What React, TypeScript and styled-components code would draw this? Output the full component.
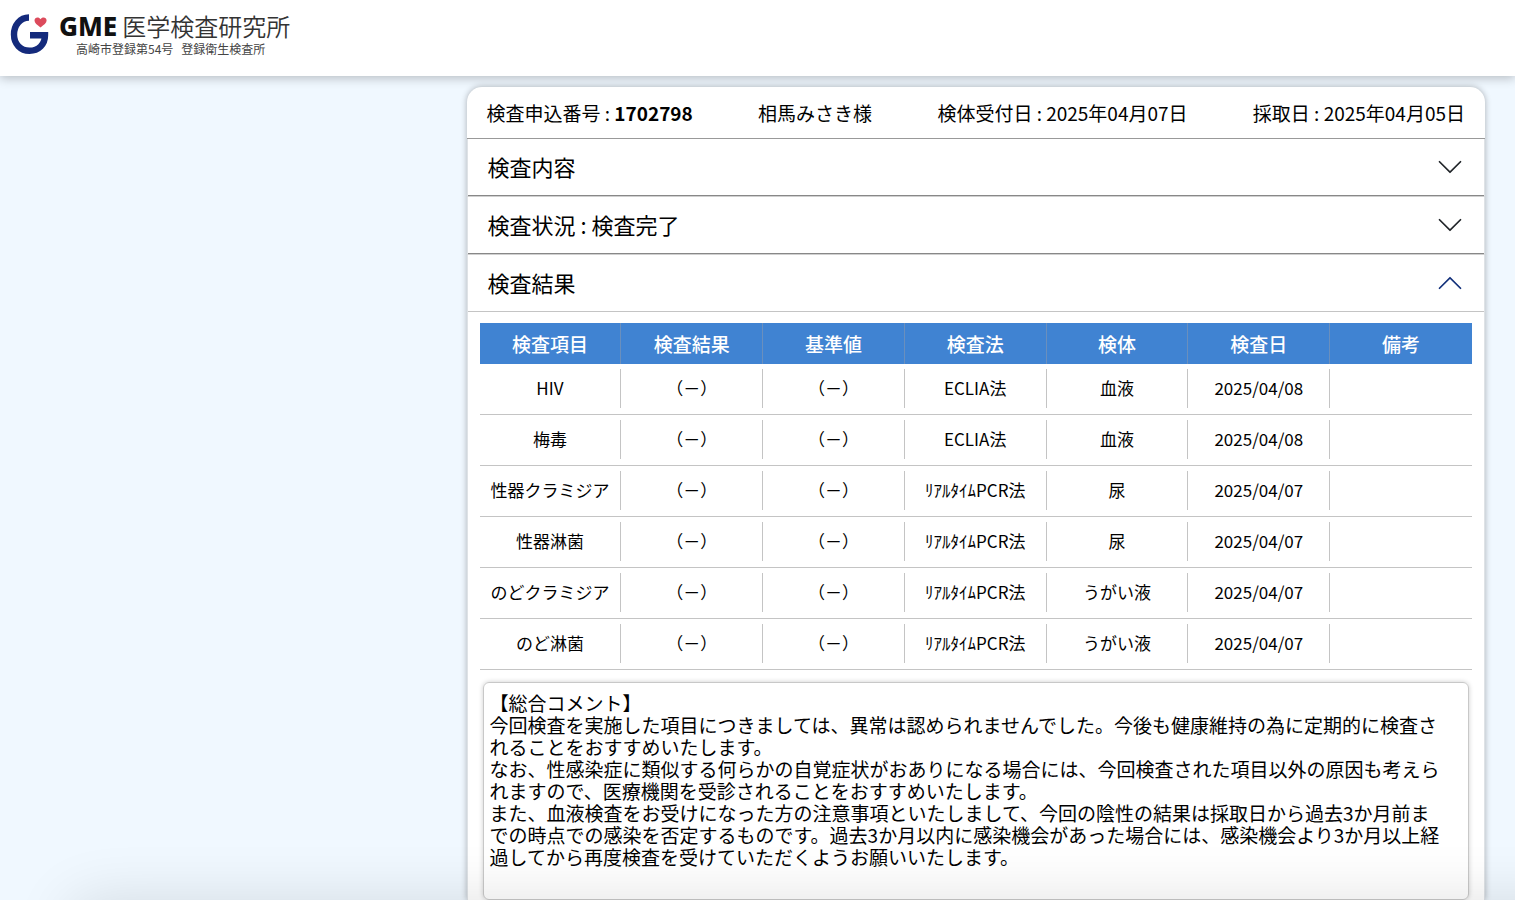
import React, { useState } from "react";
import type { ReactNode } from "react";
import styled, { createGlobalStyle } from "styled-components";

const GlobalStyle = createGlobalStyle`
  *, *::before, *::after { box-sizing: border-box; }
  body {
    margin: 0;
    background: #f0f8ff;
    color: #000;
    font-family: "Noto Sans CJK JP", sans-serif;
  }
`;

const Page = styled.div`
  display: flex;
  flex-direction: column;
  min-height: 100vh;
`;

const SiteHeader = styled.header`
  height: 76px;
  flex: none;
  padding: 10px;
  background: #fff;
  box-shadow: 0 2px 10px rgba(0, 0, 0, 0.25);
`;

const LogoLink = styled.a`
  display: inline-flex;
  gap: 10px;
  color: #222;
  text-decoration: none;
`;

const LogoMark = styled.svg`
  width: 39px;
  height: 46px;
`;

const LogoText = styled.span`
  display: flex;
  flex-direction: column;
`;

const LogoName = styled.span`
  display: flex;
  align-items: center;
  gap: 5px;
  height: 31px;
  color: #333;
  font-size: 24px;
  font-weight: 350;
  line-height: 30px;
`;

const LogoInitials = styled.span`
  color: #111;
  font-family: "Noto Sans", sans-serif;
  font-size: 26px;
  font-weight: 800;
`;

const LogoNote = styled.span`
  display: flex;
  gap: 8px;
  padding-left: 17px;
  color: #444;
  font-size: 12px;
  font-weight: 400;
  line-height: 16px;
`;

const Main = styled.main`
  display: flex;
  flex: 1;
  justify-content: flex-end;
  padding: 11px 30px 0;
`;

const Card = styled.article`
  width: 70%;
  background: #fff;
  border-radius: 15px 15px 0 0;
  box-shadow: 0 0 6px rgba(0, 0, 0, 0.3);
`;

const Summary = styled.div`
  display: flex;
  justify-content: space-between;
  align-items: center;
  height: 52px;
  padding: 0 20px;
  border-bottom: 1px solid #999;
  font-size: 19px;
  line-height: 28px;
  white-space: nowrap;
`;

const Section = styled.section`
  border: 0 solid #dee2e6;
  border-width: 0 1px;

  & + & {
    border-top: 1px solid #d0d0d0;
  }
`;

const SectionHeading = styled.h2`
  margin: 0;
`;

const SectionToggle = styled.button<{ $open: boolean }>`
  display: flex;
  justify-content: space-between;
  align-items: center;
  width: 100%;
  height: 57px;
  padding: 0 20px;
  border: 0;
  border-bottom: 1px solid ${(p) => (p.$open ? "#c4c4c4" : "#888")};
  background: #fff;
  color: #000;
  font-family: inherit;
  font-size: 22px;
  text-align: left;
  cursor: pointer;
`;

const SectionTitle = styled.span`
  padding-bottom: 2px;
`;

const Chevron = styled.svg<{ $open: boolean }>`
  width: 28px;
  height: 28px;
  color: ${(p) => (p.$open ? "#12307a" : "#212529")};
  transform: ${(p) => (p.$open ? "rotate(180deg)" : "none")};
`;

const Panel = styled.div`
  padding: 11px 12px 0;
`;

const ResultTable = styled.table`
  width: 100%;
  table-layout: fixed;
  border-collapse: separate;
  border-spacing: 0;
`;

const HeadCell = styled.th`
  height: 41px;
  padding: 0;
  background: #4083d2;
  border-right: 1px solid #6a8fbd;
  color: #fff;
  font-size: 19px;
  font-weight: 500;

  &:last-child {
    border-right: 0;
  }
`;

const Cell = styled.td`
  padding: 5px 0 6px;
  border-bottom: 1px solid #c4c4c4;
  font-size: 17px;
  white-space: nowrap;
`;

const CellContent = styled.div<{ $last: boolean }>`
  display: flex;
  justify-content: center;
  align-items: center;
  height: 39px;
  padding-bottom: 3px;
  border-right: ${(p) => (p.$last ? "0" : "1px solid #c4c4c4")};
`;

const Comment = styled.p`
  min-height: 218px;
  margin: 12px 3px 0;
  padding: 9px 26px 9px 6px;
  border: 1px solid #c8c8c8;
  border-radius: 6px;
  box-shadow: 0 0 5px rgba(0, 0, 0, 0.2);
  font-size: 19px;
  line-height: 22px;
  white-space: pre-line;
`;

const BottomShade = styled.div`
  position: fixed;
  bottom: -80px;
  left: 70px;
  right: -80px;
  height: 80px;
  border-radius: 20px;
  box-shadow: 0 0 60px rgba(0, 0, 0, 0.12);
  pointer-events: none;
`;

const columns = ["検査項目", "検査結果", "基準値", "検査法", "検体", "検査日", "備考"];

const rows = [
  ["HIV", "（－）", "（－）", "ECLIA法", "血液", "2025/04/08", ""],
  ["梅毒", "（－）", "（－）", "ECLIA法", "血液", "2025/04/08", ""],
  ["性器クラミジア", "（－）", "（－）", "ﾘｱﾙﾀｲﾑPCR法", "尿", "2025/04/07", ""],
  ["性器淋菌", "（－）", "（－）", "ﾘｱﾙﾀｲﾑPCR法", "尿", "2025/04/07", ""],
  ["のどクラミジア", "（－）", "（－）", "ﾘｱﾙﾀｲﾑPCR法", "うがい液", "2025/04/07", ""],
  ["のど淋菌", "（－）", "（－）", "ﾘｱﾙﾀｲﾑPCR法", "うがい液", "2025/04/07", ""],
];

const comment = [
  "【総合コメント】",
  "今回検査を実施した項目につきましては、異常は認められませんでした。今後も健康維持の為に定期的に検査されることをおすすめいたします。",
  "なお、性感染症に類似する何らかの自覚症状がおありになる場合には、今回検査された項目以外の原因も考えられますので、医療機関を受診されることをおすすめいたします。",
  "また、血液検査をお受けになった方の注意事項といたしまして、今回の陰性の結果は採取日から過去3か月前までの時点での感染を否定するものです。過去3か月以内に感染機会があった場合には、感染機会より3か月以上経過してから再度検査を受けていただくようお願いいたします。",
].join("\n");

function Logo() {
  return (
    <LogoLink href="#">
      <LogoMark viewBox="0 0 39 46" aria-hidden="true">
        <path
          d="M19 7.5 C10 7.5 4 15.5 4 24.5 C4 34 10.5 40.7 19.5 40.7 C28.5 40.7 35 34.5 35 25.2 H20"
          fill="none"
          stroke="#142a7c"
          strokeWidth="6.4"
        />
        <path
          d="M30.5 17.5 C27 15 24.5 13 24.5 10.6 C24.5 7.2 28.8 6.6 30.5 9.3 C32.2 6.6 36.6 7.2 36.6 10.6 C36.6 13 34 15 30.5 17.5Z"
          fill="#dc4b5c"
        />
      </LogoMark>
      <LogoText>
        <LogoName>
          <LogoInitials>GME</LogoInitials>
          <span>医学検査研究所</span>
        </LogoName>
        <LogoNote>
          <span>高崎市登録第54号</span>
          <span>登録衛生検査所</span>
        </LogoNote>
      </LogoText>
    </LogoLink>
  );
}

interface AccordionProps {
  title: string;
  initiallyOpen?: boolean;
  children?: ReactNode;
}

function Accordion({ title, initiallyOpen = false, children }: AccordionProps) {
  const [open, setOpen] = useState(initiallyOpen);
  return (
    <Section>
      <SectionHeading>
        <SectionToggle type="button" $open={open} aria-expanded={open} onClick={() => setOpen(!open)}>
          <SectionTitle>{title}</SectionTitle>
          <Chevron $open={open} viewBox="0 0 16 16" fill="currentColor" aria-hidden="true">
            <path d="M1.646 4.646a.5.5 0 0 1 .708 0L8 10.293l5.646-5.647a.5.5 0 0 1 .708.708l-6 6a.5.5 0 0 1-.708 0l-6-6a.5.5 0 0 1 0-.708z" />
          </Chevron>
        </SectionToggle>
      </SectionHeading>
      {open && children ? <Panel>{children}</Panel> : null}
    </Section>
  );
}

export default function App() {
  return (
    <Page>
      <GlobalStyle />
      <SiteHeader>
        <Logo />
      </SiteHeader>
      <Main>
        <Card>
          <Summary>
            <span>
              検査申込番号 : <strong>1702798</strong>
            </span>
            <span>相馬みさき様</span>
            <span>検体受付日 : 2025年04月07日</span>
            <span>採取日 : 2025年04月05日</span>
          </Summary>
          <Accordion title="検査内容" />
          <Accordion title="検査状況 : 検査完了" />
          <Accordion title="検査結果" initiallyOpen>
            <ResultTable>
              <thead>
                <tr>
                  {columns.map((name) => (
                    <HeadCell key={name} scope="col">
                      {name}
                    </HeadCell>
                  ))}
                </tr>
              </thead>
              <tbody>
                {rows.map((row) => (
                  <tr key={row[0]}>
                    {row.map((value, i) => (
                      <Cell key={columns[i]}>
                        <CellContent $last={i === row.length - 1}>{value}</CellContent>
                      </Cell>
                    ))}
                  </tr>
                ))}
              </tbody>
            </ResultTable>
            <Comment>{comment}</Comment>
          </Accordion>
        </Card>
      </Main>
      <BottomShade />
    </Page>
  );
}
